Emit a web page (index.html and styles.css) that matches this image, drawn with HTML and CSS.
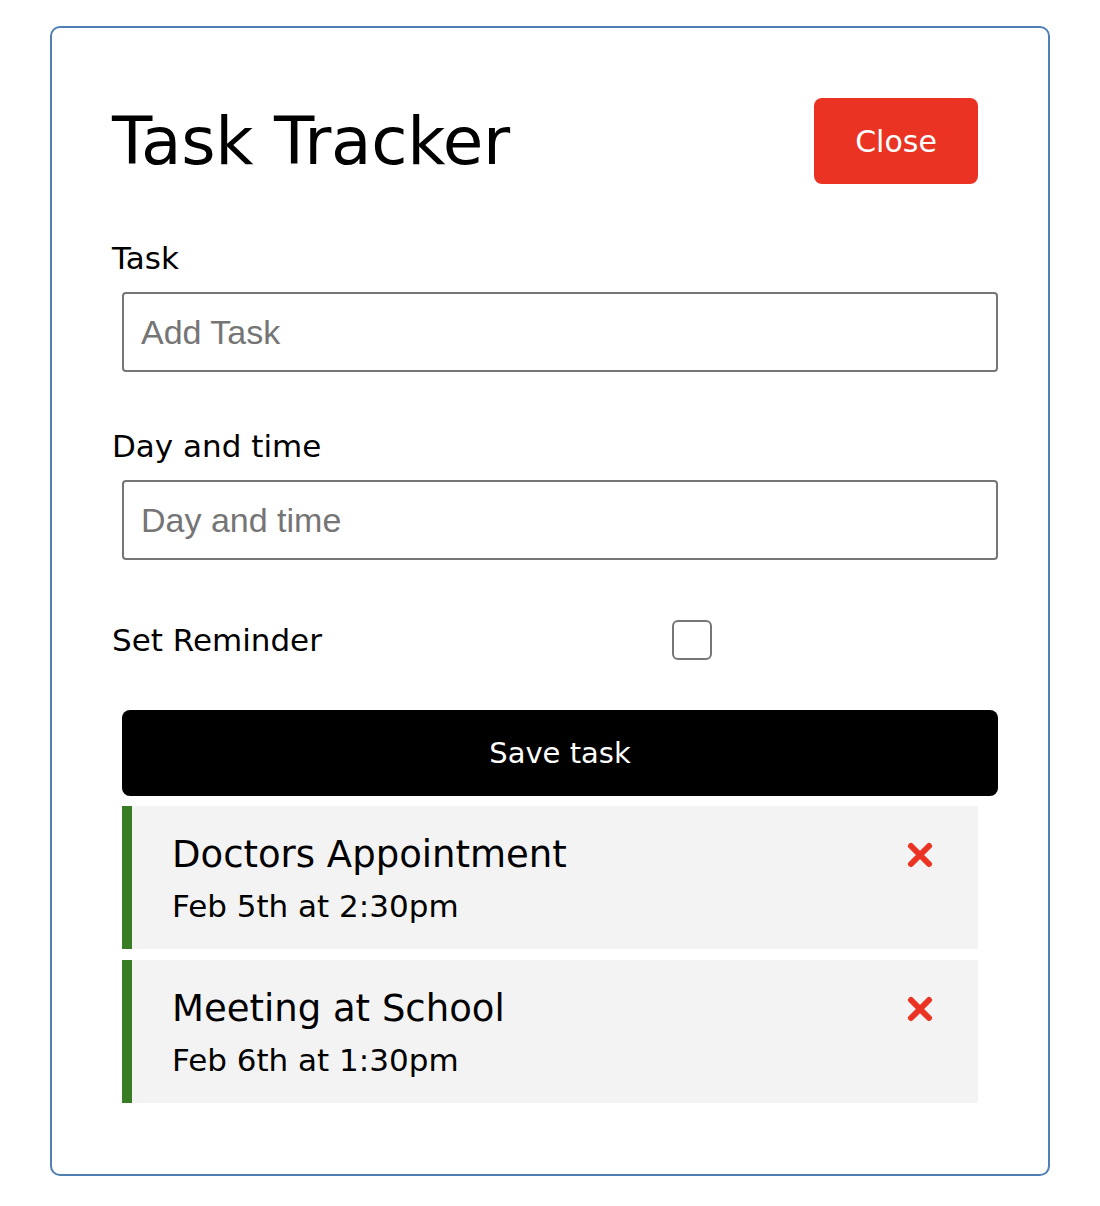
FILE: index.html
```html
<!DOCTYPE html>
<html lang="en">
<head>
<meta charset="utf-8">
<title>Task Tracker</title>
<link rel="stylesheet" href="styles.css">
</head>
<body>
<div class="container">
  <header class="header">
    <h1>Task Tracker</h1>
    <button class="btn btn-red">Close</button>
  </header>
  <form class="add-form">
    <div class="form-control">
      <label>Task</label>
      <input type="text" placeholder="Add Task">
    </div>
    <div class="form-control">
      <label>Day and time</label>
      <input type="text" placeholder="Day and time">
    </div>
    <div class="form-control form-control-check">
      <label>Set Reminder</label>
      <div class="check-wrap"><input type="checkbox"></div>
    </div>
    <button type="button" class="btn btn-block">Save task</button>
  </form>
  <div class="tasks">
    <div class="task reminder">
      <h3>Doctors Appointment
        <svg class="del" viewBox="0 0 28 28" width="28" height="28"><path d="M5 5 L23 23 M23 5 L5 23" /></svg>
      </h3>
      <p>Feb 5th at 2:30pm</p>
    </div>
    <div class="task reminder">
      <h3>Meeting at School
        <svg class="del" viewBox="0 0 28 28" width="28" height="28"><path d="M5 5 L23 23 M23 5 L5 23" /></svg>
      </h3>
      <p>Feb 6th at 1:30pm</p>
    </div>
  </div>
</div>
</body>
</html>
```
FILE: styles.css
```css
* { box-sizing: border-box; }

body {
  margin: 0;
  font-family: "DejaVu Sans", "Inter", sans-serif;
  color: #000;
  background: #fff;
}

.container {
  width: 1000px;
  margin: 26px auto 0;
  border: 2px solid #4f7fb3;
  border-radius: 10px;
  padding: 60px 60px 61px;
}

.header {
  display: flex;
  justify-content: space-between;
  align-items: center;
  margin-bottom: 40px;
}

.header h1 {
  margin: 0;
  font-size: 66px;
  font-weight: 400;
  letter-spacing: -0.3px;
}

.btn {
  display: inline-block;
  background: #000;
  color: #fff;
  border: none;
  border-radius: 8px;
  margin: 10px;
  height: 86px;
  font-family: inherit;
  font-size: 30px;
  cursor: pointer;
}

.btn-red {
  background: #ea3323;
  width: 164px;
}

.btn-block {
  display: block;
  width: 100%;
  font-size: 29px;
}

.form-control {
  display: flow-root;
  margin: 40px 0;
}

.form-control label {
  display: block;
  font-size: 31px;
  line-height: 48px;
}

.form-control input[type="text"] {
  display: block;
  width: 100%;
  height: 80px;
  margin: 10px;
  padding: 6px 17px;
  font-family: "Liberation Sans", Arial, sans-serif;
  font-size: 34px;
  border: 2px solid #767676;
  border-radius: 4px;
}

.form-control input::placeholder {
  color: #757575;
}

.form-control-check {
  display: flex;
  align-items: center;
  height: 60px;
}

.form-control-check label {
  flex: 1;
}

.check-wrap {
  flex: 2;
  display: flex;
  justify-content: center;
}

.check-wrap input {
  appearance: none;
  -webkit-appearance: none;
  width: 40px;
  height: 40px;
  margin: 0 9px 0 0;
  border: 2px solid #767676;
  border-radius: 6px;
  background: #fff;
}

.task {
  background: #f3f3f3;
  margin: 10px;
  padding: 21px 40px 20px;
  height: 143px;
}

.task + .task {
  margin-top: 11px;
}

.task.reminder {
  border-left: 10px solid #387c26;
}

.task h3 {
  display: flex;
  justify-content: space-between;
  align-items: center;
  margin: 0;
  font-size: 37px;
  font-weight: 400;
  line-height: 56px;
}

.task p {
  margin: 0;
  font-size: 31px;
  line-height: 46px;
}

.del {
  fill: none;
  stroke: #ea3323;
  stroke-width: 6;
  stroke-linecap: round;
  margin-right: 4px;
}
```
